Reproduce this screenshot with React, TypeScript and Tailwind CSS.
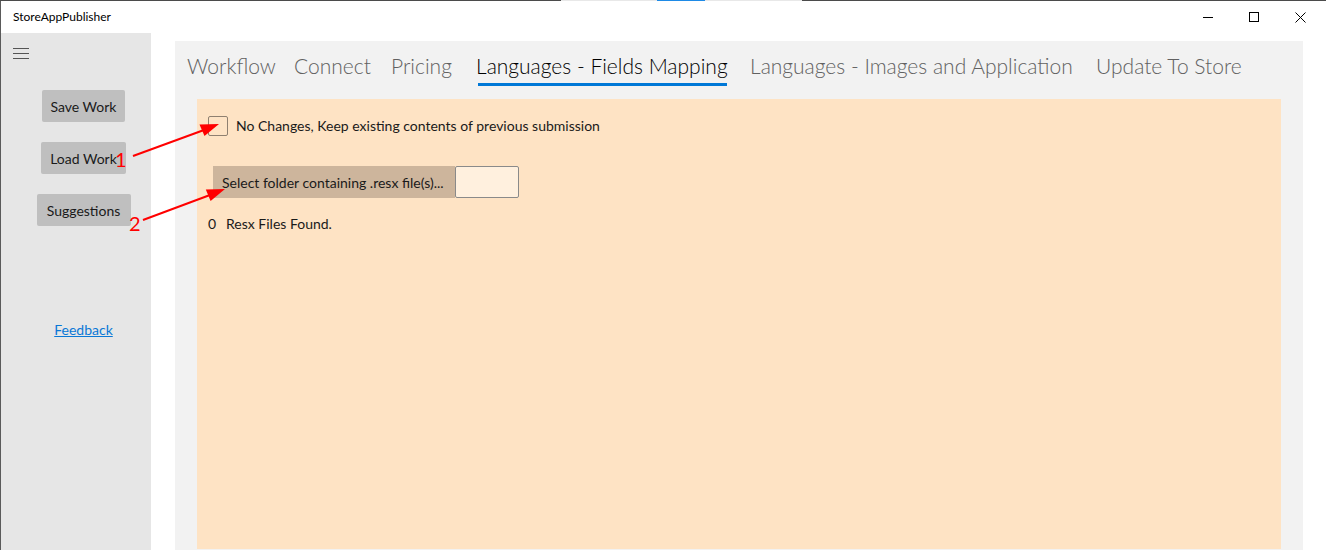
import React from 'react';

const tabs = [
  { label: 'Workflow', w: 'w-[107px]' },
  { label: 'Connect', w: 'w-[97px]' },
  { label: 'Pricing', w: 'w-[85px]' },
  { label: 'Languages - Fields Mapping', w: 'w-[274px]', active: true },
  { label: 'Languages - Images and Application', w: 'w-[346px]' },
  { label: 'Update To Store', w: 'w-[160px]' },
];

const SideButton = ({ label, w }: { label: string; w: string }) => (
  <button className={`${w} h-[32px] bg-[#bfbfbf] rounded-[2px] text-[14px] text-[#1a1a1a]`}>{label}</button>
);

const Arrows = () => (
  <svg className="absolute left-0 top-0 pointer-events-none" width="1326" height="550">
    <line x1="133" y1="156" x2="204" y2="130" stroke="#ff0000" strokeWidth="2" />
    <polygon points="219,124 199.5,124.5 204.5,136" fill="#ff0000" />
    <line x1="143" y1="220" x2="210" y2="195" stroke="#ff0000" strokeWidth="2" />
    <polygon points="225,189 205.8,189.6 210.6,201" fill="#ff0000" />
    <text x="115" y="167" fill="#ff0000" fontSize="20" fontFamily="Lato, 'Liberation Sans', sans-serif">1</text>
    <text x="129" y="231" fill="#ff0000" fontSize="20" fontFamily="Lato, 'Liberation Sans', sans-serif">2</text>
  </svg>
);

export default function App() {
  return (
    <div className="relative w-[1326px] h-[550px] overflow-hidden bg-white font-['Lato','Liberation_Sans',sans-serif] text-[#1a1a1a]">
      {/* screen edge */}
      <div className="flex h-px">
        <div className="w-[561px] bg-[#4b4b4b]" />
        <div className="w-[96px] bg-[#e8e8e8]" />
        <div className="w-[48px] bg-[#1e8ae6]" />
        <div className="w-[97px] bg-[#e8e8e8]" />
        <div className="flex-1 bg-[#4b4b4b]" />
      </div>
      <div className="flex h-[549px]">
        <div className="w-px bg-[#5a5a5a]" />
        <div className="flex-1 flex flex-col">
          {/* title bar */}
          <div className="h-[32px] flex items-center">
            <span className="ml-[12px] text-[12px] text-black">StoreAppPublisher</span>
            <div className="ml-auto flex items-center h-full">
              <div className="w-[46px] h-full flex items-center justify-center">
                <div className="w-[10px] h-px bg-black" />
              </div>
              <div className="w-[46px] h-full flex items-center justify-center">
                <div className="w-[10px] h-[10px] border border-black" />
              </div>
              <div className="w-[46px] h-full flex items-center justify-center">
                <svg width="11" height="11" viewBox="0 0 11 11">
                  <path d="M0.5 0.5 L10.5 10.5 M10.5 0.5 L0.5 10.5" stroke="#000" strokeWidth="1" />
                </svg>
              </div>
              <div className="w-[3px]" />
            </div>
          </div>
          <div className="flex flex-1">
            {/* sidebar */}
            <div className="w-[150px] bg-[#e6e6e6] flex flex-col">
              <div className="ml-[12px] mt-[15px] flex flex-col gap-[4px] w-[16px]">
                <div className="h-px bg-[#555]" />
                <div className="h-px bg-[#555]" />
                <div className="h-px bg-[#555]" />
              </div>
              <div className="pl-[15px] mt-[31px] flex flex-col items-center gap-[20px]">
                <SideButton label="Save Work" w="w-[83px]" />
                <SideButton label="Load Work" w="w-[85px]" />
                <SideButton label="Suggestions" w="w-[94px]" />
                <a className="mt-[73px] text-[14px] text-[#0a78d6] underline">Feedback</a>
              </div>
            </div>
            <div className="w-[24px]" />
            {/* main */}
            <div className="w-[1128px] mt-[8px] bg-[#f2f2f2] flex flex-col">
              <div className="h-[58px] flex pl-[12px] pt-[11px]">
                {tabs.map((t) => (
                  <div key={t.label} className={`${t.w} flex flex-col items-start`}>
                    <span className={`text-[21px] font-light leading-[28px] ${t.active ? 'text-black' : 'text-[#616161]'}`}>{t.label}</span>
                    {t.active && <div className="ml-[2px] mt-[3px] w-[249px] h-[3px] bg-[#0078d7]" />}
                  </div>
                ))}
              </div>
              <div className="mx-[22px] flex-1 mb-[1px] bg-[#fee3c4] flex flex-col pl-[11px] pt-[16px] text-[14px]">
                <div className="flex items-center gap-[8px]">
                  <div className="w-[20px] h-[20px] border border-[#8f8070] rounded-[2px]" />
                  <span>No Changes, Keep existing contents of previous submission</span>
                </div>
                <div className="flex mt-[30px] ml-[5px]">
                  <div className="w-[242px] h-[32px] bg-[#cdb59c] flex items-center pl-[9px]">Select folder containing .resx file(s)...</div>
                  <div className="w-[64px] h-[32px] bg-[#fff0de] border border-[#8a8a8a] rounded-[2px]" />
                </div>
                <div className="flex mt-[16px] leading-[20px]">
                  <span className="w-[18px]">0</span>
                  <span>Resx Files Found.</span>
                </div>
              </div>
            </div>
          </div>
        </div>
      </div>
      <Arrows />
    </div>
  );
}
